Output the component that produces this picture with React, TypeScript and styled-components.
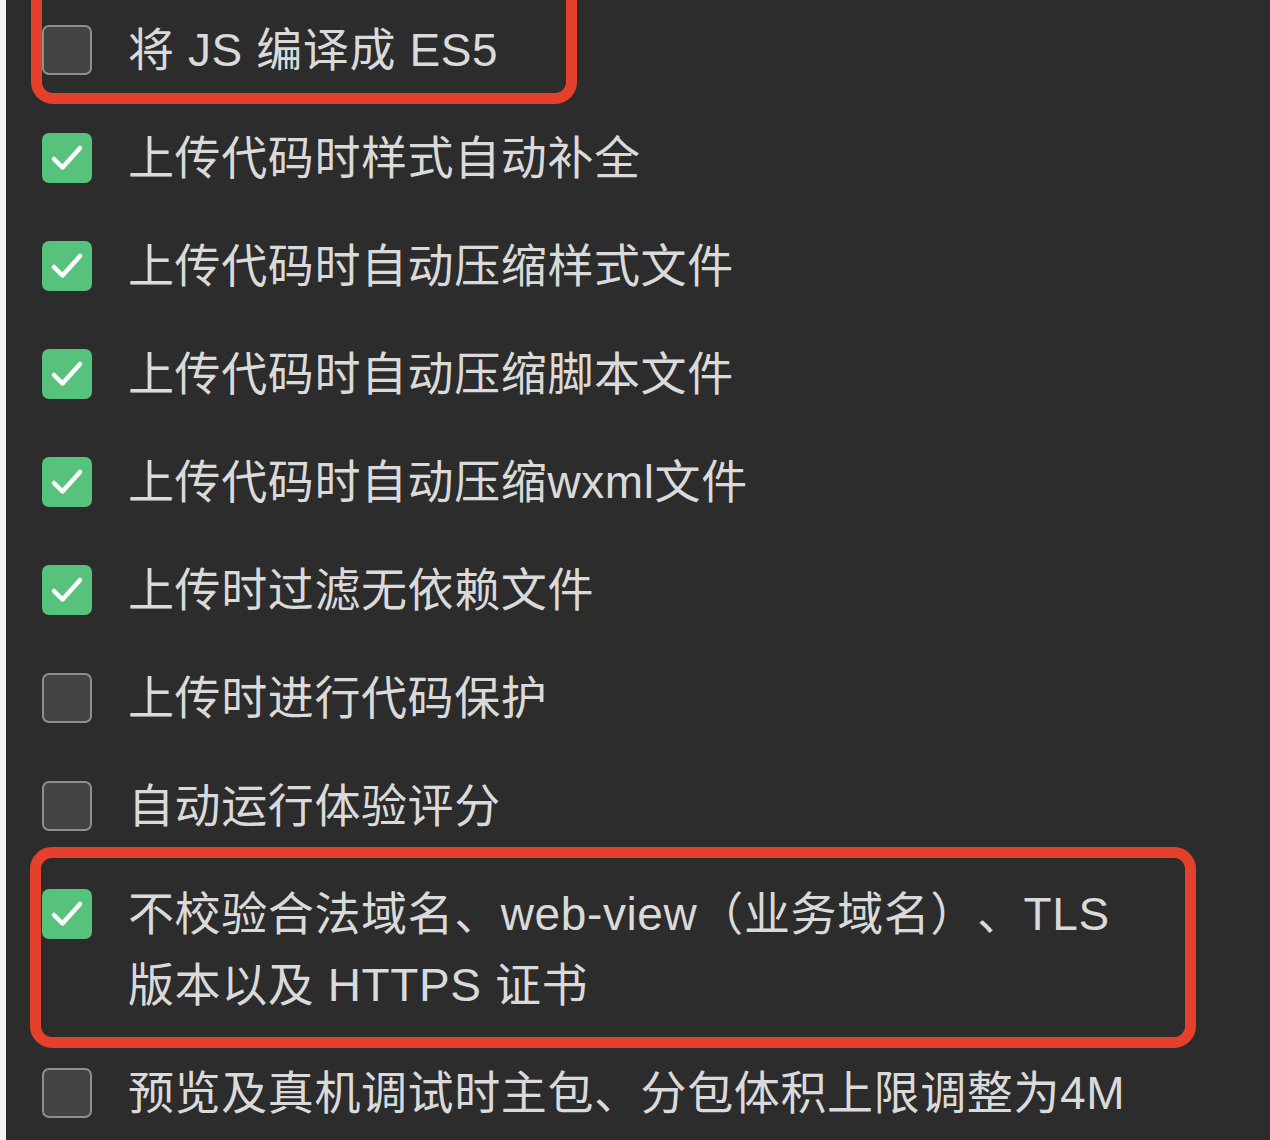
import React from "react";
import styled, { createGlobalStyle } from "styled-components";

const GlobalStyle = createGlobalStyle`
  html, body {
    margin: 0;
    padding: 0;
    background: #2c2c2c;
  }
  body {
    font-family: "Liberation Sans", "Noto Sans CJK SC", sans-serif;
  }
`;

const Page = styled.div`
  display: flex;
  width: 1270px;
  height: 1140px;
  overflow: hidden;
  background: #2c2c2c;
`;

const EdgeStrip = styled.div`
  flex: 0 0 6px;
  background: #f4f4f4;
`;

const List = styled.div`
  flex: 1;
  display: flex;
  flex-direction: column;
  margin-top: -4px;
  padding-left: 36px;
`;

const Row = styled.div`
  position: relative;
  display: flex;
  align-items: flex-start;
  gap: 36px;
  padding: 18.5px 0;
`;

const Highlight = styled.div<{ top: number; bottom: number; left: number; right: number }>`
  position: absolute;
  top: ${(p) => p.top}px;
  bottom: ${(p) => p.bottom}px;
  left: ${(p) => p.left}px;
  right: ${(p) => p.right}px;
  border: 11px solid #e5402c;
  border-radius: 22px;
  pointer-events: none;
`;

const Box = styled.div<{ checked: boolean }>`
  flex: 0 0 auto;
  box-sizing: border-box;
  width: 50px;
  height: 50px;
  margin-top: 10.5px;
  border-radius: 7px;
  display: flex;
  align-items: center;
  justify-content: center;
  background: ${(p) => (p.checked ? "#57c27b" : "#434343")};
  border: ${(p) => (p.checked ? "none" : "2px solid #8e8e8e")};
`;

const Label = styled.div`
  font-size: 46px;
  line-height: 71px;
  color: #dadada;
  max-width: 1020px;
  letter-spacing: 0.6px;
  text-spacing-trim: space-all;
`;

const CheckMark = () => (
  <svg width="40" height="40" viewBox="0 0 40 40">
    <path
      d="M7 21 L15.5 29.5 L33 10"
      fill="none"
      stroke="#ffffff"
      strokeWidth="4.5"
      strokeLinecap="round"
      strokeLinejoin="round"
    />
  </svg>
);

type Item = {
  label: string;
  checked: boolean;
  mark?: { top: number; bottom: number; left: number; right: number };
};

const items: Item[] = [
  { label: "将 JS 编译成 ES5", checked: false, mark: { top: -40, bottom: 0, left: -11, right: 693 } },
  { label: "上传代码时样式自动补全", checked: true },
  { label: "上传代码时自动压缩样式文件", checked: true },
  { label: "上传代码时自动压缩脚本文件", checked: true },
  { label: "上传代码时自动压缩wxml文件", checked: true },
  { label: "上传时过滤无依赖文件", checked: true },
  { label: "上传时进行代码保护", checked: false },
  { label: "自动运行体验评分", checked: false },
  {
    label: "不校验合法域名、web-view（业务域名）、TLS 版本以及 HTTPS 证书",
    checked: true,
    mark: { top: -13, bottom: -9, left: -12, right: 74 },
  },
  { label: "预览及真机调试时主包、分包体积上限调整为4M", checked: false },
];

export default function App() {
  return (
    <Page>
      <GlobalStyle />
      <EdgeStrip />
      <List>
        {items.map((it) => (
          <Row key={it.label}>
            <Box checked={it.checked}>{it.checked && <CheckMark />}</Box>
            <Label>{it.label}</Label>
            {it.mark && <Highlight {...it.mark} />}
          </Row>
        ))}
      </List>
    </Page>
  );
}
